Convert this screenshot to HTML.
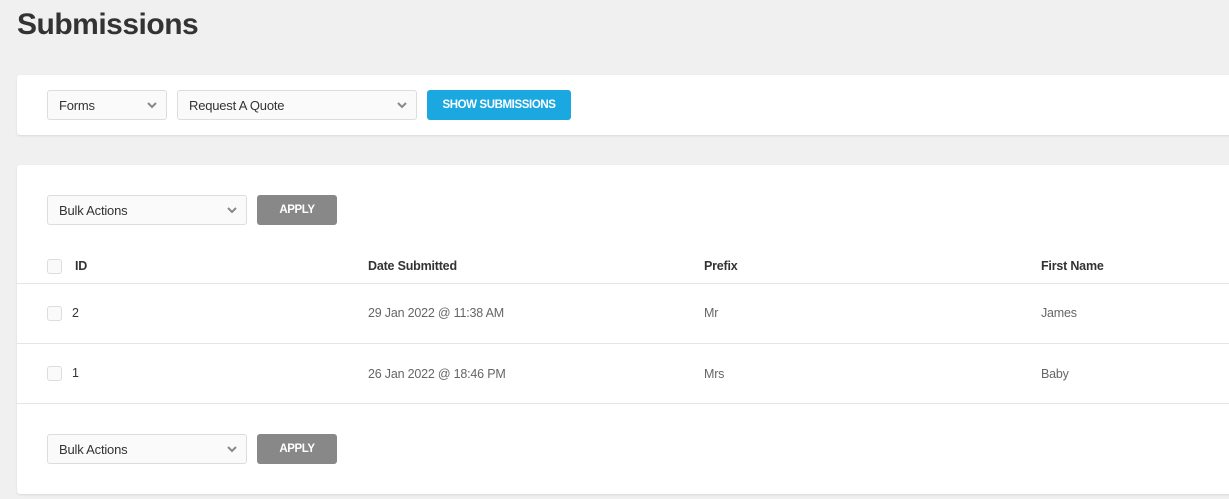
<!DOCTYPE html>
<html><head><style>
*{box-sizing:border-box;margin:0;padding:0}
body{width:1229px;height:499px;background:#f0f0f0;font-family:"Liberation Sans",Arial,sans-serif;position:relative;overflow:hidden;color:#333}
h1{position:absolute;left:17px;top:8px;font-size:30px;font-weight:bold;color:#333;letter-spacing:-0.5px}
.panel{position:absolute;left:17px;width:1230px;background:#fff;border-radius:3px;box-shadow:0 1px 2px rgba(0,0,0,.1)}
.sel{position:absolute;height:30px;border:1px solid #ddd;border-radius:3px;background:#fafafa;font-size:13px;line-height:29px;padding-left:11px;color:#333;letter-spacing:-0.2px}
.sel svg{position:absolute;right:9px;top:11px}
.btn{position:absolute;height:30px;border-radius:3px;color:#fff;font-size:11.5px;font-weight:bold;text-align:center;line-height:31px;letter-spacing:-0.4px}
.cb{position:absolute;width:15px;height:15px;border:1px solid #ddd;border-radius:3px;background:#fafafa}
.t{position:absolute;font-size:12.5px;letter-spacing:-0.2px}
.h{font-weight:bold;color:#333}
.v{color:#666}
.line{position:absolute;left:0;right:0;height:1px;background:#e5e5e5}
</style></head><body>
<h1>Submissions</h1>
<div class="panel" style="top:75px;height:60px">
 <div class="sel" style="left:30px;top:15px;width:120px">Forms<svg width="10" height="7"><path d="M1 1l4 4 4-4" stroke="#888" stroke-width="2" fill="none"/></svg></div>
 <div class="sel" style="left:160px;top:15px;width:240px">Request A Quote<svg width="10" height="7"><path d="M1 1l4 4 4-4" stroke="#888" stroke-width="2" fill="none"/></svg></div>
 <div class="btn" style="left:410px;top:15px;width:144px;background:#1ba7e0">SHOW SUBMISSIONS</div>
</div>
<div class="panel" style="top:165px;height:329px">
 <div class="sel" style="left:30px;top:30px;width:200px">Bulk Actions<svg width="10" height="7"><path d="M1 1l4 4 4-4" stroke="#888" stroke-width="2" fill="none"/></svg></div>
 <div class="btn" style="left:240px;top:30px;width:80px;background:#888">APPLY</div>
 <div class="cb" style="left:30px;top:94px"></div>
 <div class="t h" style="left:58px;top:94px">ID</div>
 <div class="t h" style="left:351px;top:94px">Date Submitted</div>
 <div class="t h" style="left:687px;top:94px">Prefix</div>
 <div class="t h" style="left:1024px;top:94px">First Name</div>
 <div class="line" style="top:118px"></div>
 <div class="cb" style="left:30px;top:141px"></div>
 <div class="t h" style="left:55px;top:141px;font-weight:normal;color:#333">2</div>
 <div class="t v" style="left:351px;top:141px">29 Jan 2022 @ 11:38 AM</div>
 <div class="t v" style="left:687px;top:141px">Mr</div>
 <div class="t v" style="left:1024px;top:141px">James</div>
 <div class="line" style="top:178px"></div>
 <div class="cb" style="left:30px;top:201px"></div>
 <div class="t h" style="left:55px;top:201px;font-weight:normal;color:#333">1</div>
 <div class="t v" style="left:351px;top:202px">26 Jan 2022 @ 18:46 PM</div>
 <div class="t v" style="left:687px;top:202px">Mrs</div>
 <div class="t v" style="left:1024px;top:202px">Baby</div>
 <div class="line" style="top:238px"></div>
 <div class="sel" style="left:30px;top:269px;width:200px">Bulk Actions<svg width="10" height="7"><path d="M1 1l4 4 4-4" stroke="#888" stroke-width="2" fill="none"/></svg></div>
 <div class="btn" style="left:240px;top:269px;width:80px;background:#888">APPLY</div>
</div>
</body></html>
